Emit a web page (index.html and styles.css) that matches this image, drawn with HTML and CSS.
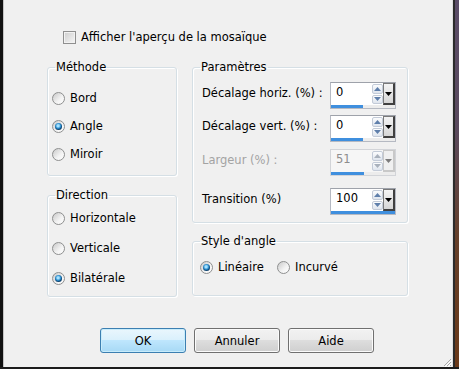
FILE: index.html
```html
<!DOCTYPE html>
<html lang="fr">
<head>
<meta charset="UTF-8">
<title>Mosaïque</title>
<link rel="stylesheet" href="styles.css">
</head>
<body>
<div class="window">
  <div class="edge-left"></div>
  <div class="dialog">
    <label class="option">
      <span class="check"></span>
      <span>Afficher l'aperçu de la mosaïque</span>
    </label>

    <div class="columns">
      <div class="col-left">
        <fieldset class="group method">
          <legend>Méthode</legend>
          <label class="choice"><span class="radio"></span>Bord</label>
          <label class="choice"><span class="radio on"></span>Angle</label>
          <label class="choice"><span class="radio"></span>Miroir</label>
        </fieldset>
        <fieldset class="group direction">
          <legend>Direction</legend>
          <label class="choice"><span class="radio"></span>Horizontale</label>
          <label class="choice"><span class="radio"></span>Verticale</label>
          <label class="choice"><span class="radio on"></span>Bilatérale</label>
        </fieldset>
      </div>

      <div class="col-right">
        <fieldset class="group params">
          <legend>Paramètres</legend>
          <div class="param first">
            <span class="param-label">Décalage horiz. (%) :</span>
            <div class="spin">
              <div class="spin-top">
                <span class="spin-value">0</span>
                <span class="spin-arrows">
                  <span><svg width="7" height="4" viewBox="0 0 7 4"><path d="M0 4 L3.5 0 L7 4 Z"/></svg></span>
                  <span><svg width="7" height="4" viewBox="0 0 7 4"><path d="M0 0 L3.5 4 L7 0 Z"/></svg></span>
                </span>
                <span class="spin-drop"><svg width="7" height="4" viewBox="0 0 7 4"><path d="M0 0 L3.5 4 L7 0 Z"/></svg></span>
              </div>
              <div class="spin-bar"><div class="spin-fill" style="width: 50%"></div></div>
            </div>
          </div>
          <div class="param second">
            <span class="param-label">Décalage vert. (%) :</span>
            <div class="spin">
              <div class="spin-top">
                <span class="spin-value">0</span>
                <span class="spin-arrows">
                  <span><svg width="7" height="4" viewBox="0 0 7 4"><path d="M0 4 L3.5 0 L7 4 Z"/></svg></span>
                  <span><svg width="7" height="4" viewBox="0 0 7 4"><path d="M0 0 L3.5 4 L7 0 Z"/></svg></span>
                </span>
                <span class="spin-drop"><svg width="7" height="4" viewBox="0 0 7 4"><path d="M0 0 L3.5 4 L7 0 Z"/></svg></span>
              </div>
              <div class="spin-bar"><div class="spin-fill" style="width: 50%"></div></div>
            </div>
          </div>
          <div class="param third disabled">
            <span class="param-label">Largeur (%) :</span>
            <div class="spin">
              <div class="spin-top">
                <span class="spin-value">51</span>
                <span class="spin-arrows">
                  <span><svg width="7" height="4" viewBox="0 0 7 4"><path d="M0 4 L3.5 0 L7 4 Z"/></svg></span>
                  <span><svg width="7" height="4" viewBox="0 0 7 4"><path d="M0 0 L3.5 4 L7 0 Z"/></svg></span>
                </span>
                <span class="spin-drop"><svg width="7" height="4" viewBox="0 0 7 4"><path d="M0 0 L3.5 4 L7 0 Z"/></svg></span>
              </div>
              <div class="spin-bar"><div class="spin-fill" style="width: 51%"></div></div>
            </div>
          </div>
          <div class="param fourth">
            <span class="param-label">Transition (%)</span>
            <div class="spin">
              <div class="spin-top">
                <span class="spin-value">100</span>
                <span class="spin-arrows">
                  <span><svg width="7" height="4" viewBox="0 0 7 4"><path d="M0 4 L3.5 0 L7 4 Z"/></svg></span>
                  <span><svg width="7" height="4" viewBox="0 0 7 4"><path d="M0 0 L3.5 4 L7 0 Z"/></svg></span>
                </span>
                <span class="spin-drop"><svg width="7" height="4" viewBox="0 0 7 4"><path d="M0 0 L3.5 4 L7 0 Z"/></svg></span>
              </div>
              <div class="spin-bar"><div class="spin-fill" style="width: 100%"></div></div>
            </div>
          </div>
        </fieldset>
        <fieldset class="group corner">
          <legend>Style d'angle</legend>
          <div class="inline-choices">
            <label class="choice linear"><span class="radio on"></span>Linéaire</label>
            <label class="choice"><span class="radio"></span>Incurvé</label>
          </div>
        </fieldset>
      </div>
    </div>

    <div class="buttons">
      <button class="btn default">OK</button>
      <button class="btn">Annuler</button>
      <button class="btn">Aide</button>
    </div>

    <svg class="grip" width="10" height="10" viewBox="0 0 10 10">
      <path d="M9 2 L2 9 M9 5 L5 9 M9 8 L8 9" stroke="#a8a8a8" stroke-width="1"/>
      <path d="M10 3 L3 10 M10 6 L6 10" stroke="#ffffff" stroke-width="1"/>
    </svg>
  </div>
  <div class="edge-right"></div>
</div>
</body>
</html>
```

FILE: styles.css
```css
html, body {
  margin: 0;
  padding: 0;
}
body {
  font-family: "DejaVu Sans", Verdana, sans-serif;
  font-size: 11.5px;
  color: #000;
  background: #1a1a1a;
}
.window {
  display: flex;
  width: 459px;
  height: 367px;
  border-bottom: 2px solid #1c1c1c;
}
.edge-left {
  width: 4px;
  background: linear-gradient(to right, #111 0 3px, #c4c4c4 3px 4px);
}
.edge-right {
  width: 7px;
  background:
    linear-gradient(to right, #dedede 0 1px, #2b2b2b 1px 3px, transparent 3px),
    linear-gradient(#5b4d68 0%, #5a4a5e 35%, #66402a 65%, #6b3a1a 100%);
}
.dialog {
  flex: 1;
  position: relative;
  background: #f0f0f0;
}

/* checkbox row */
.option {
  display: flex;
  align-items: center;
  gap: 5px;
  height: 14px;
  margin: 30px 0 0 59px;
}
.check {
  width: 13px;
  height: 13px;
  box-sizing: border-box;
  border: 1px solid #8f8f8f;
  background: linear-gradient(135deg, #cdcdcd, #f7f7f7);
  box-shadow: inset 0 0 0 1px #f2f2f2;
}

.columns {
  display: flex;
  gap: 15px;
  margin: 16px 0 0 43px;
}
.col-left {
  width: 130px;
}
.col-right {
  width: 216px;
}

/* group boxes */
.group {
  margin: 0;
  padding: 0 0 0 4px;
  border: 1px solid #d5dfe5;
  border-radius: 3px;
  box-shadow: inset 1px 1px 0 #fff, 1px 1px 0 #fff;
}
.group legend {
  margin-left: 3px;
  padding: 0 1px;
  line-height: 14px;
}
.method {
  padding-top: 10px;
  padding-bottom: 7px;
}
.direction {
  margin-top: 12px;
  padding-top: 1px;
  padding-bottom: 3px;
}
.direction .choice {
  height: 30px;
}
.params {
  padding: 0 0 7px 9px;
}
.params legend {
  margin-left: -2px;
}
.corner {
  margin-top: 11px;
  padding: 5px 0 14px 7px;
}
.corner legend {
  margin-left: 0;
}

.choice {
  display: flex;
  align-items: center;
  gap: 5px;
  height: 28px;
}
.inline-choices {
  display: flex;
}
.choice.linear {
  width: 77px;
}
.radio {
  position: relative;
  width: 13px;
  height: 13px;
  box-sizing: border-box;
  border-radius: 50%;
  border: 1px solid #8e8f8f;
  background: linear-gradient(135deg, #c9c9c9, #f4f4f4 60%, #fdfdfd);
}
.radio.on::after {
  content: "";
  position: absolute;
  left: 2px;
  top: 2px;
  width: 7px;
  height: 7px;
  border-radius: 50%;
  background: radial-gradient(circle at 45% 40%, #a6e2ff 0 1px, #2d8fd0 2.5px, #0d4f82 3.5px, #0a3a63 4px);
}

/* spin boxes */
.param {
  display: flex;
  align-items: center;
}
.param.first { margin-top: 8px; }
.param.second { margin-top: 6px; }
.param.third { margin-top: 7px; }
.param.fourth { margin-top: 12px; }
.param-label {
  width: 128px;
  margin-top: -6px;
}
.spin {
  display: flex;
  flex-direction: column;
  width: 66px;
  height: 27px;
  box-sizing: border-box;
  border: 1px solid #b5b9c2;
  border-top-color: #9ea2aa;
  background: #fff;
}
.spin-top {
  display: flex;
  height: 22px;
}
.spin-value {
  flex: 1;
  padding: 2px 0 0 5px;
  line-height: 14px;
}
.spin-arrows {
  display: flex;
  flex-direction: column;
  gap: 1px;
  width: 11px;
  padding: 1px 0;
  box-sizing: border-box;
}
.spin-arrows span {
  flex: 1;
  display: flex;
  align-items: center;
  justify-content: center;
  border: 1px solid #c3cbd8;
  border-radius: 2px;
  background: linear-gradient(#fbfcfd, #dfe5ee);
}
.spin-arrows svg {
  fill: #5f7fab;
}
.spin-drop {
  display: flex;
  align-items: center;
  justify-content: center;
  width: 12px;
  box-sizing: border-box;
  border: 1px solid #7a7a7a;
  border-right: 2px solid #404040;
  border-bottom: 2px solid #404040;
  background: linear-gradient(#f4f4f4, #d6d6d6);
}
.spin-drop svg {
  fill: #000;
}
.spin-bar {
  height: 3px;
  margin-top: auto;
  background: #ececec;
}
.spin-fill {
  max-width: 33px;
  height: 100%;
  background: #3f8fde;
}
.fourth .spin-fill {
  max-width: none;
}
.disabled .param-label {
  color: #a3a3a3;
}
.disabled .spin {
  border-color: #d2d4d8;
  background: #f6f6f6;
}
.disabled .spin-value {
  color: #8d8d8d;
}
.disabled .spin-arrows svg {
  fill: #a9b1bc;
}
.disabled .spin-drop {
  border-color: #c8c8c8;
  background: #f0f0f0;
}
.disabled .spin-drop svg {
  fill: #7c7c7c;
}

/* buttons */
.buttons {
  display: flex;
  gap: 8px;
  margin: 31px 0 0 96px;
}
.btn {
  width: 86px;
  height: 25px;
  box-sizing: border-box;
  padding: 0;
  font-family: inherit;
  font-size: 11.5px;
  color: #000;
  border: 1px solid #707070;
  border-radius: 3px;
  background: linear-gradient(#f2f2f2 0%, #ebebeb 50%, #dddddd 50%, #cfcfcf 100%);
  box-shadow: inset 0 0 0 1px #fbfbfb;
}
.btn.default {
  border-color: #3c7fb1;
  background: linear-gradient(#eaf6fd 0%, #d9f0fc 50%, #bee6fd 50%, #a7d9f5 100%);
  box-shadow: inset 0 0 0 1px #c8ecfb;
}

.grip {
  position: absolute;
  right: 0;
  bottom: 0;
}
```
